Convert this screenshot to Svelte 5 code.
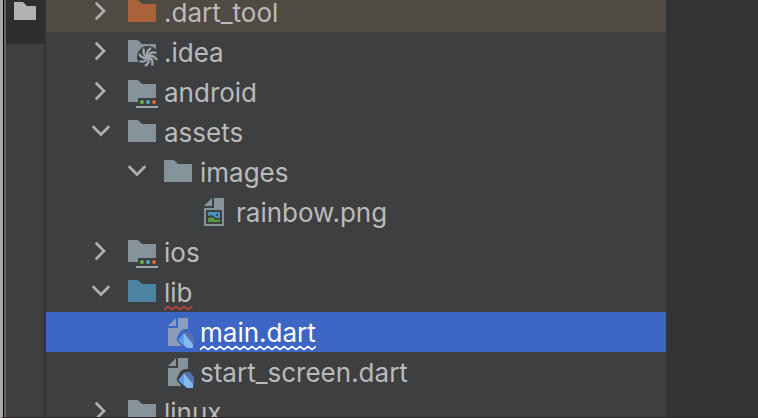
<script lang="ts">
  type Icon = 'excluded' | 'idea' | 'module' | 'folder' | 'source' | 'image' | 'dart';

  interface Item {
    id: string;
    name: string;
    depth: number;
    icon: Icon;
    parent?: string;
    branch?: boolean;
    error?: boolean;
  }

  const items: Item[] = [
    { id: 'dart_tool', name: '.dart_tool', depth: 0, icon: 'excluded', branch: true },
    { id: 'idea', name: '.idea', depth: 0, icon: 'idea', branch: true },
    { id: 'android', name: 'android', depth: 0, icon: 'module', branch: true },
    { id: 'assets', name: 'assets', depth: 0, icon: 'folder', branch: true },
    { id: 'images', name: 'images', depth: 1, icon: 'folder', branch: true, parent: 'assets' },
    { id: 'rainbow', name: 'rainbow.png', depth: 2, icon: 'image', parent: 'images' },
    { id: 'ios', name: 'ios', depth: 0, icon: 'module', branch: true },
    { id: 'lib', name: 'lib', depth: 0, icon: 'source', branch: true, error: true },
    { id: 'main', name: 'main.dart', depth: 1, icon: 'dart', parent: 'lib', error: true },
    { id: 'start', name: 'start_screen.dart', depth: 1, icon: 'dart', parent: 'lib' },
    { id: 'linux', name: 'linux', depth: 0, icon: 'module', branch: true },
  ];

  let open = $state<Record<string, boolean>>({ assets: true, images: true, lib: true });
  let selected = $state('main');

  function isVisible(item: Item): boolean {
    if (!item.parent) return true;
    const parent = items.find((i) => i.id === item.parent);
    return !!open[item.parent] && !!parent && isVisible(parent);
  }

  let visible = $derived(items.filter(isVisible));
</script>

{#snippet itemIcon(icon: Icon)}
  <svg class="icon {icon}" viewBox="0 0 32 32" aria-hidden="true">
    {#if icon === 'image'}
      <path class="base" d="M14 2v8H6z" />
      <path class="base" fill-rule="evenodd" d="M16 2h10v28H6V12h10zM8 14v14h16V14z" />
      <path fill="#4891b8" d="M10 16h12v8H10z" />
      <path fill="#3e3f41" d="M10 20l4-1 4 3 4 0v2H10z" />
      <path fill="#5b9344" d="M10 22l4-1 4 3 4-1v3H10z" />
      <circle cx="19" cy="19" r="1" fill="#3e3f41" />
    {:else if icon === 'dart'}
      <path class="base" d="M14 2v8H6z" />
      <path class="base" d="M16 2h10v28H6V12h10z" />
      <path class="cutout" d="M32 13h-8q-4 0-6 3l-3 6q-1 2 1 4l5 6h11z" />
      <path fill="#5670ad" d="M22 17l2-1h4l4 5v8h-1z" />
      <path fill="#83b8f0" d="M22 17l9 11v4h-6l-7-6z" />
      <path fill="#5c9fe8" d="M22 17v12l-5-4q-1-1 0-2z" />
    {:else}
      <path class="base" d="M2 4h8q2 0 3 1l3 3h14v18H2z" />
      {#if icon === 'idea'}
        <circle class="cutout" cx="22" cy="21" r="11" />
        <g class="fan">
          {#each [0, 45, 90, 135, 180, 225, 270, 315] as angle (angle)}
            <path transform="rotate({angle} 22 21)" d="M22 21q-3-5 3-9" />
          {/each}
        </g>
      {:else if icon === 'module'}
        <path class="cutout" d="M12 22h20v8H12z" />
        <circle cx="16" cy="26" r="2" fill="#6cae45" />
        <circle cx="22" cy="26" r="2" fill="#4fa8d2" />
        <circle cx="28" cy="26" r="2" fill="#e0672f" />
        <path fill="#9da8b1" d="M10 30h22v2H10z" />
      {/if}
    {/if}
  </svg>
{/snippet}

<div class="window">
  <nav class="stripe" aria-label="Tool windows">
    <button type="button" class="project" aria-label="Project">
      <svg viewBox="0 0 22 18" aria-hidden="true"><path d="M0 0h9l4 4h9v14H0z" /></svg>
    </button>
  </nav>

  <ul class="tree" role="tree" aria-label="Project files">
    {#each visible as item (item.id)}
      <li
        class="row depth-{item.depth}"
        class:excluded-row={item.icon === 'excluded'}
        class:selected={selected === item.id}
        role="treeitem"
        aria-selected={selected === item.id}
        aria-expanded={item.branch ? !!open[item.id] : undefined}
      >
        {#if item.branch}
          <button
            type="button"
            class="toggle"
            aria-label="Toggle {item.name}"
            onclick={() => (open[item.id] = !open[item.id])}
          >
            <svg viewBox="0 0 32 32" aria-hidden="true">
              <path d={open[item.id] ? 'M9.5 11l7.5 7.5 7.5-7.5' : 'M12.5 7.5l7.5 7.5-7.5 7.5'} />
            </svg>
          </button>
        {:else}
          <span class="toggle"></span>
        {/if}
        <button type="button" class="item" onclick={() => (selected = item.id)}>
          {@render itemIcon(item.icon)}
          <span class="name">
            {item.name}
            {#if item.error}
              <svg class="wave" aria-hidden="true">
                <defs>
                  <pattern id="wave-{item.id}" width="8" height="6" patternUnits="userSpaceOnUse">
                    <path d="M-2 3l2 1.5 4-3 4 3 2-1.5" />
                  </pattern>
                </defs>
                <rect width="100%" height="6" fill="url(#wave-{item.id})" stroke="none" />
              </svg>
            {/if}
          </span>
        </button>
      </li>
    {/each}
  </ul>

  <main class="editor"></main>
</div>

<style>
  :global(body) {
    margin: 0;
    background: #323335;
  }

  .window {
    display: flex;
    box-sizing: border-box;
    height: 100vh;
    overflow: hidden;
    border-left: 3px solid #aaaaaa;
    border-bottom: 1px solid #302a2d;
    background: #3e3f41;
    color: #bbbbbb;
    font-family: Inter, 'Liberation Sans', sans-serif;
    font-size: 26px;
  }

  button {
    margin: 0;
    padding: 0;
    border: 0;
    background: none;
    color: inherit;
    font: inherit;
    cursor: pointer;
  }

  .stripe {
    flex: none;
    width: 38px;
    border-left: 2px solid #656565;
    border-right: 2px solid #323335;
    box-shadow: -1px 0 #000000;
    margin-left: 1px;
  }

  .project {
    display: flex;
    justify-content: center;
    width: 100%;
    height: 44px;
    padding-top: 2px;
    background: #2d2e30;
  }

  .project svg {
    width: 22px;
    height: 18px;
    fill: #b0b2b4;
  }

  .tree {
    flex: 1;
    min-width: 0;
    /* scrolled part of the way into the first row */
    margin: -8px 0 0;
    padding: 0;
    list-style: none;
  }

  .row {
    display: flex;
    align-items: center;
    gap: 10px;
    height: 40px;
    padding-left: 38px;
    --row-bg: #3e3f41;
    background: var(--row-bg);
  }

  .depth-1 {
    padding-left: 74px;
  }

  .depth-2 {
    padding-left: 110px;
  }

  .excluded-row {
    --row-bg: #4f4a42;
  }

  .selected {
    --row-bg: #3d65c4;
    color: #ffffff;
  }

  .toggle {
    flex: none;
    width: 32px;
    height: 32px;
  }

  .toggle svg {
    display: block;
    fill: none;
    stroke: #adafb0;
    stroke-width: 2.7;
    stroke-linecap: round;
  }

  .item {
    display: flex;
    align-items: center;
    gap: 6px;
    min-width: 0;
  }

  .icon {
    flex: none;
    width: 32px;
    height: 32px;
  }

  .base {
    fill: #87939a;
  }

  .selected .base {
    fill: #8a9cb8;
  }

  .excluded .base {
    fill: #a9623a;
  }

  .source .base {
    fill: #4d84a1;
  }

  .cutout {
    fill: var(--row-bg);
  }

  .fan {
    fill: none;
    stroke: #9da8b1;
    stroke-width: 2.2;
  }

  .name {
    position: relative;
    padding-top: 2px;
    line-height: 32px;
    white-space: nowrap;
  }

  .wave {
    position: absolute;
    left: 0;
    bottom: -2px;
    width: 100%;
    height: 6px;
    fill: none;
    stroke: #c0453e;
    stroke-width: 1.6;
  }

  .selected .wave {
    stroke: #ffffff;
  }

  .editor {
    flex: none;
    width: 92px;
    background: #323335;
  }
</style>
